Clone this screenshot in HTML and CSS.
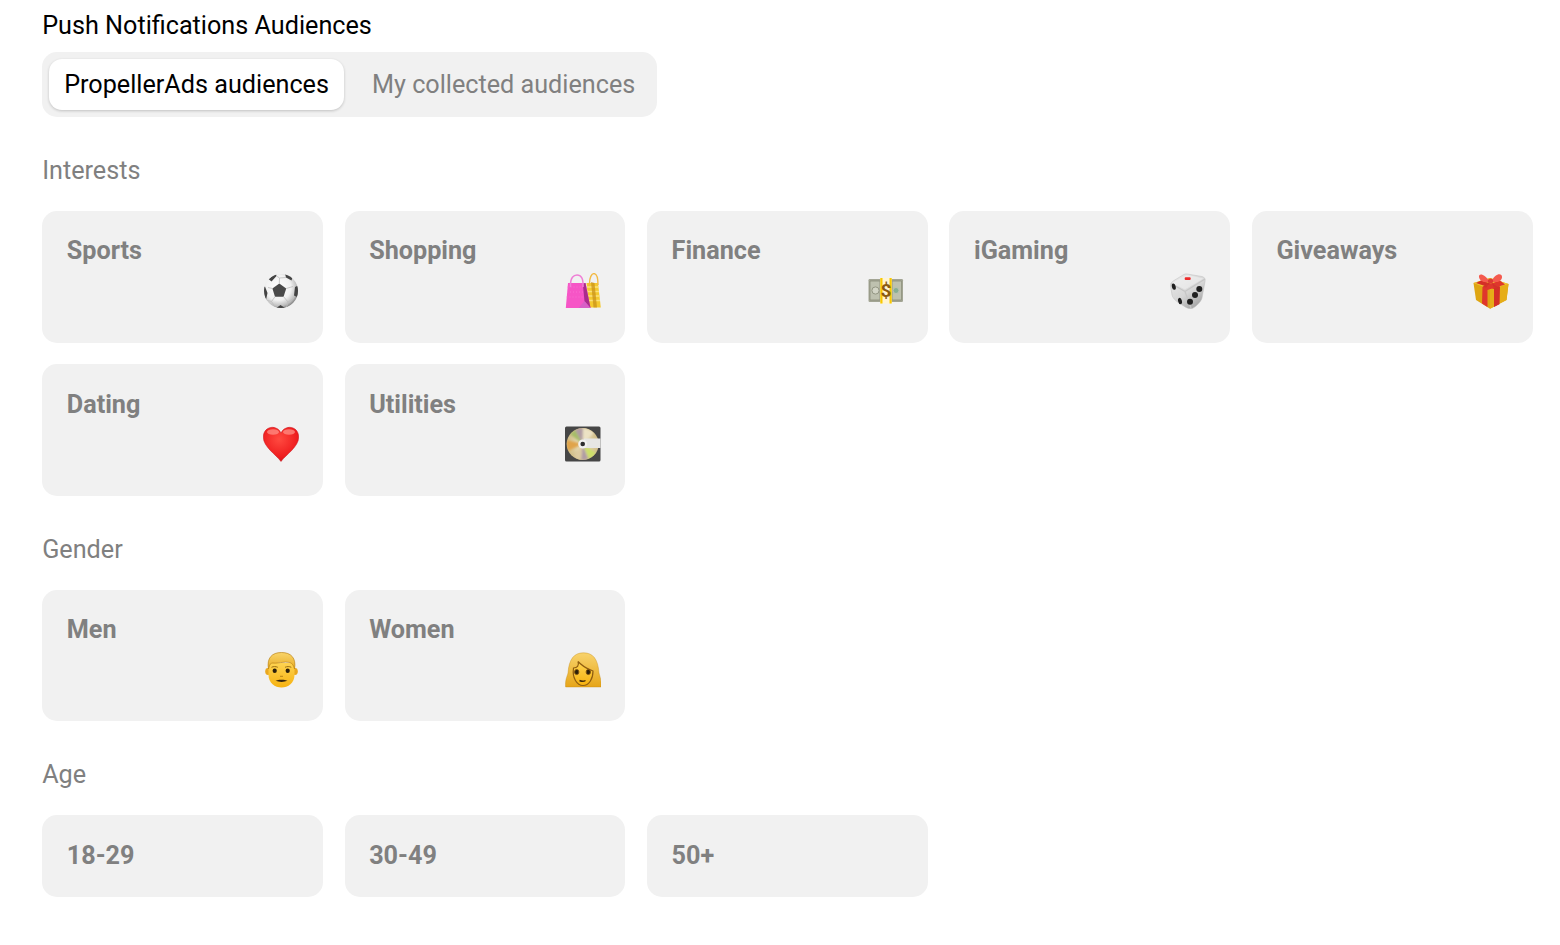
FILE: index.html
```html
<!DOCTYPE html>
<html lang="en">
<head>
<meta charset="utf-8">
<title>Push Notifications Audiences</title>
<link rel="stylesheet" href="styles.css">
</head>
<body>
<main class="page">
  <h1 class="title">Push Notifications Audiences</h1>
  <div class="tabs">
    <button class="tab tab-active">PropellerAds audiences</button>
    <button class="tab">My collected audiences</button>
  </div>

  <section class="group">
    <h2 class="group-title">Interests</h2>
    <div class="grid">
      <div class="card"><span class="card-name">Sports</span>
        <svg class="emoji" viewBox="0 0 36 36"><defs><radialGradient id="ball" cx=".42" cy=".4" r=".62"><stop offset="0" stop-color="#fff"/><stop offset=".6" stop-color="#f1f1f1"/><stop offset=".88" stop-color="#bdbdbd"/><stop offset="1" stop-color="#858585"/></radialGradient><clipPath id="ballclip"><circle cx="18" cy="18" r="17"/></clipPath></defs><circle cx="18" cy="18" r="17" fill="url(#ball)"/><g clip-path="url(#ballclip)"><path d="M16.300 10.500 23.200 15.500 20.600 23.700H12L9.400 15.500Z" fill="#4a4a4a"/><path d="M5.500 6 13 .5 13.500 3 8.500 8.500ZM22 .5 30 3 28.500 7.500 23 4.500ZM0 14 2 13.500 4.500 20 3 27 0 26ZM36 12 32 14 31 22.500 36 25ZM12 36 17.500 32 23.500 36Z" fill="#444"/><path d="M16.300 10.500 16.500 5 13.500 3M16.500 5 23 4.500M9.400 15.500 5 14.500M23.200 15.500 30 13.500M12 23.700 8.500 28.500 3 27M20.600 23.700 25 29 31 25M8.500 28.500 12 34M25 29 23.500 34" fill="none" stroke="#bdbdbd" stroke-width=".8"/></g></svg>
      </div>
      <div class="card"><span class="card-name">Shopping</span>
        <svg class="emoji" viewBox="0 0 36 36"><path d="M21.500 10h11.500l2.800 24.500H24Z" fill="#f4c92f"/><path d="M22 14h11.500M22 18.500h12M23 23h11.500M23 27.500h12" stroke="#fbe27a" stroke-width="1.600"/><path d="M26 9 28.500 34.500H32L29.500 10Z" fill="#c9921a" opacity=".75"/><path d="M24.500 13C24 4 27 .6 29 .6 31 .6 33 3.500 33 12" fill="none" stroke="#f2b944" stroke-width="1.400"/><path d="M3 10h17.500l5 25H.8Z" fill="#f655c6"/><path d="M2.500 14h19M2 19h20M1.500 24h21" stroke="#fb7ad6" stroke-width=".7" stroke-dasharray="1 2"/><path d="M17.800 10.500 19.500 28.500 25.500 35 20.500 10Z" fill="#a92c8c"/><path d="M13.500 35 19.500 28 25.500 35Z" fill="#d85fc6"/><path d="M5.500 14C5 4 9 2 12 2 16 2 18.500 5 18 14" fill="none" stroke="#ef80d6" stroke-width="1.500"/></svg>
      </div>
      <div class="card"><span class="card-name">Finance</span>
        <svg class="emoji" viewBox="0 0 36 36"><rect x=".5" y="6" width="34.500" height="23" rx="1.200" fill="#a3a594"/><rect x="2" y="8" width="31.500" height="19" fill="#c9cbbb"/><path d="M2 8h10v19H2ZM24 8h9.500v19H24Z" fill="#bec1af" stroke="#8b8e7a" stroke-width=".8"/><circle cx="7.500" cy="17.500" r="3.600" fill="#d3d5c6" stroke="#939683"/><circle cx="28" cy="17.500" r="3" fill="#88ad94" stroke="#bcc4b2"/><rect x="12.300" y="5" width="11.400" height="25.500" fill="#fff4d2"/><rect x="12.300" y="5" width="2.200" height="25.500" fill="#f8c800"/><rect x="21.500" y="5" width="2.200" height="25.500" fill="#f8c800"/><text class="dollar" x="18" y="24" text-anchor="middle">$</text></svg>
      </div>
      <div class="card"><span class="card-name">iGaming</span>
        <svg class="emoji" viewBox="0 0 36 36"><defs><linearGradient id="die" x1="0" y1="0" x2=".7" y2="1"><stop offset="0" stop-color="#ececec"/><stop offset=".6" stop-color="#d6d6d6"/><stop offset="1" stop-color="#a4a4a4"/></linearGradient></defs><path d="M17 1 32 3.500C34.500 4 35.700 6 35 8.500L32 25C31.500 28 26 34 22.500 35.300 20 36 17 35.500 13 32.500 7 29 3 26 2 22L.6 13C.3 11 1.500 9 4 7.500L13 2C14.500 1 16 .8 17 1Z" fill="url(#die)" stroke="#bcbcbc" stroke-width=".5"/><path d="M.8 10.500 15 18.500 21 35M15 18.500 35 6" fill="none" stroke="#c6c6c6" stroke-width="1.200"/><path d="M2 10 17 2 33.500 5.500 15 16.500Z" fill="#f2f2f2" opacity=".55"/><rect x="14.700" y="4.300" width="6" height="2.600" rx="1" fill="#ee2b2b"/><ellipse cx="3.800" cy="13.700" rx="1.900" ry="3.200" fill="#1f1f1f" transform="rotate(-15 3.800 13.700)"/><ellipse cx="10" cy="28" rx="1.900" ry="3.200" fill="#1f1f1f" transform="rotate(-15 10 28)"/><circle cx="29.300" cy="16" r="3" fill="#1f1f1f"/><circle cx="25" cy="22" r="3" fill="#1f1f1f"/><circle cx="20" cy="28.700" r="3" fill="#1f1f1f"/></svg>
      </div>
      <div class="card"><span class="card-name">Giveaways</span>
        <svg class="emoji" viewBox="0 0 36 36"><path d="M.5 10 17 5 35.500 11 33.500 27 17 35.800 3 27Z" fill="#dea512"/><path d="M17 16.500 17 35.800 33.500 27 35.500 11Z" fill="#e6ad18"/><path d="M.5 10 17 5 35.500 11 17 16.500Z" fill="#f0c132"/><path d="M8 7.500 27 13.600 26.500 31.200 21 34 21 16 3 10Z" fill="#d42f27"/><path d="M27 7.500 9.500 13.700 9 30.500 14.500 34 14.500 17 32 11.500Z" fill="#df362c"/><path d="M16.500 8.500C12 1 5.500-.5 6 4 6.500 8 11.500 10.500 16.500 8.500ZM18.500 8.500C22 0 29.500-.5 29 4.500 28.500 8.500 23 10 18.500 8.500Z" fill="#f45a4e"/><path d="M16.500 9C14 11 11 12.500 10 14L13.500 14.500ZM18 9C20 11 23 12.500 24.500 14L21 14.500Z" fill="#d23329"/><circle cx="17.500" cy="8" r="2.600" fill="#dd3a32"/></svg>
      </div>
      <div class="card"><span class="card-name">Dating</span>
        <svg class="emoji" viewBox="0 0 36 36"><defs><radialGradient id="heart" cx=".45" cy=".35" r=".75"><stop offset="0" stop-color="#ff4a40"/><stop offset=".7" stop-color="#ee1c1e"/><stop offset="1" stop-color="#b80d14"/></radialGradient></defs><path d="M18 35.500C13 28.500 .3 21 .3 11 .3 5 4.500 1.300 9.500 1.300 13 1.300 16.500 3.500 18 7 19.500 3.500 23 1.300 26.500 1.300 31.500 1.300 35.700 5 35.700 11 35.700 21 23 28.500 18 35.500Z" fill="url(#heart)" stroke="#c8101a" stroke-width=".5"/><ellipse cx="10" cy="6" rx="6" ry="2.800" fill="#ff8f85" opacity=".75"/><ellipse cx="26" cy="6" rx="6" ry="2.800" fill="#ff8f85" opacity=".75"/></svg>
      </div>
      <div class="card"><span class="card-name">Utilities</span>
        <svg class="emoji" viewBox="0 0 36 36"><defs><radialGradient id="disc"><stop offset="0" stop-color="#efe6c8"/><stop offset="1" stop-color="#d0bd88"/></radialGradient><filter id="soft"><feGaussianBlur stdDeviation="1.100"/></filter><clipPath id="discclip"><circle cx="17.700" cy="18" r="16"/></clipPath></defs><rect x="0" y=".5" width="35.500" height="35" rx="1.500" fill="#464646"/><circle cx="17.700" cy="18" r="16" fill="url(#disc)"/><g clip-path="url(#discclip)"><g filter="url(#soft)"><path d="M17.700 18 10 4A16 16 0 0 1 18 2ZM17.700 18 16 34A16 16 0 0 0 23 33Z" fill="#b09ca4"/><path d="M17.700 18 18 2A16 16 0 0 1 29 7Z" fill="#ece2c4"/><path d="M17.700 18 2 14A16 16 0 0 0 3 25Z" fill="#e0a44c"/><path d="M17.700 18 10 4 5 8Z" fill="#a6bd68"/><path d="M17.700 18 24 33A16 16 0 0 0 31 27Z" fill="#ccdf6a"/><path d="M17.700 18 9 31A16 16 0 0 0 16 34Z" fill="#dccaa0"/></g></g><rect x="19" y="12.500" width="16.500" height="9.500" fill="#e6e6e4"/><circle cx="17.700" cy="18" r="4.500" fill="#f2f2f0"/><circle cx="17.700" cy="18" r="2.300" fill="#2e2e2e"/></svg>
      </div>
    </div>
  </section>

  <section class="group">
    <h2 class="group-title">Gender</h2>
    <div class="grid">
      <div class="card"><span class="card-name">Men</span>
        <svg class="emoji" viewBox="0 0 36 36"><defs><linearGradient id="skin" x1="0" y1="0" x2="0" y2="1"><stop offset="0" stop-color="#fed351"/><stop offset="1" stop-color="#f6b211"/></linearGradient><linearGradient id="hair" x1="0" y1="0" x2="0" y2="1"><stop offset="0" stop-color="#f9d46a"/><stop offset="1" stop-color="#e8ac24"/></linearGradient></defs><ellipse cx="5" cy="19.500" rx="2.800" ry="3.400" fill="#eaa820"/><ellipse cx="32" cy="19.500" rx="2.800" ry="3.400" fill="#eaa820"/><path d="M5.500 11H31.500V23C31.500 31 25 35.500 18.500 35.500S5.500 31 5.500 23Z" fill="url(#skin)"/><path d="M5.500 17C3.500 6 9 .5 18.500 .5 28 .5 33.500 6 31.500 17 30.500 13.500 29.500 11.500 27 10.500 21 9 14 12 8.500 11 7 12.500 6 14 5.500 17Z" fill="url(#hair)" stroke="#bb8415" stroke-width=".7"/><ellipse cx="11.700" cy="18.700" rx="2.100" ry="2.300" fill="#2b1f0b"/><ellipse cx="24.700" cy="18.700" rx="2.100" ry="2.300" fill="#2b1f0b"/><path d="M8.500 15.300c2-1 4.300-1 6.300 0M22 15.300c2-1 4.300-1 6.300 0" stroke="#9b6f14" stroke-width="1" fill="none"/><path d="M12.500 28.800C15 27.300 22 27.300 24.500 28.800 21 30.300 16 30.300 12.500 28.800Z" fill="#35240d"/><path d="M17 24.300h3" stroke="#b07a14" stroke-width=".9"/></svg>
      </div>
      <div class="card"><span class="card-name">Women</span>
        <svg class="emoji" viewBox="0 0 36 36"><defs><linearGradient id="skin2" x1="0" y1="0" x2="0" y2="1"><stop offset="0" stop-color="#fed351"/><stop offset="1" stop-color="#f6b211"/></linearGradient><linearGradient id="hair2" x1="0" y1="0" x2="0" y2="1"><stop offset="0" stop-color="#f8d36c"/><stop offset="1" stop-color="#e6a519"/></linearGradient></defs><path d="M.6 35C0 28 2 25 3 21 4 7 9 .8 18.500 .8S33 7 34 21C35 25 36.500 28 36 35Z" fill="url(#hair2)" stroke="#c58c14" stroke-width=".4"/><path d="M8.500 16C12 16 14.500 14 13 9.500 19 16 24 17 28 19 28 27 24 33.500 18 33.500S7 26 8.500 16Z" fill="url(#skin2)" stroke="#8f5d10" stroke-width="1.200"/><ellipse cx="11.700" cy="20" rx="2.200" ry="2.600" fill="#2b1f0b" stroke="#7f5210" stroke-width=".9"/><ellipse cx="23.300" cy="20" rx="2.200" ry="2.600" fill="#2b1f0b" stroke="#7f5210" stroke-width=".9"/><path d="M14.500 28.500c2 .9 4.500 .9 6 0" stroke="#40290a" stroke-width="1.400" fill="none"/></svg>
      </div>
    </div>
  </section>

  <section class="group">
    <h2 class="group-title">Age</h2>
    <div class="grid">
      <div class="card card-short"><span class="card-name">18-29</span></div>
      <div class="card card-short"><span class="card-name">30-49</span></div>
      <div class="card card-short"><span class="card-name">50+</span></div>
    </div>
  </section>
</main>
</body>
</html>
```

FILE: styles.css
```css
* {
  box-sizing: border-box;
}

html,
body {
  margin: 0;
  background: #fff;
}

body {
  font-family: Roboto, "Liberation Sans", sans-serif;
  color: #000;
}

.page {
  padding: 9.500px 27.400px 0 42.200px;
}

.title {
  margin: 0 0 11.500px;
  font-size: 25.200px;
  line-height: 31px;
  font-weight: 400;
}

.tabs {
  display: inline-flex;
  align-items: center;
  gap: 13px;
  height: 65px;
  padding: 7px;
  border-radius: 15px;
  background: #f1f1f1;
  vertical-align: top;
}

.tab {
  height: 51px;
  padding: 0 15px;
  border: 0;
  border-radius: 13px;
  background: transparent;
  color: #808080;
  font: 400 25.200px/31px Roboto, sans-serif;
  white-space: nowrap;
}

.tab-active {
  background: #fff;
  color: #000;
  box-shadow: 0 1px 3px rgba(0, 0, 0, .2);
}

.group {
  margin-top: 38px;
}

.group-title {
  margin: 0 0 25px;
  color: #808080;
  font-size: 25.200px;
  line-height: 31px;
  font-weight: 400;
}

.grid {
  display: grid;
  grid-template-columns: repeat(5, 1fr);
  gap: 21.600px;
}

.card {
  display: flex;
  flex-direction: column;
  justify-content: space-between;
  height: 131.600px;
  padding: 24.400px 24px 33.500px 24.600px;
  border-radius: 15px;
  background: #f1f1f1;
}

.card-short {
  height: 82px;
  padding-top: 25px;
}

.card-name {
  color: #808080;
  font-size: 25.200px;
  line-height: 31px;
  font-weight: 700;
}

.emoji {
  display: block;
  align-self: flex-end;
  width: 36px;
  height: 36px;
}

.dollar {
  fill: #8a5a12;
  font: 700 19px Roboto, sans-serif;
}
```
